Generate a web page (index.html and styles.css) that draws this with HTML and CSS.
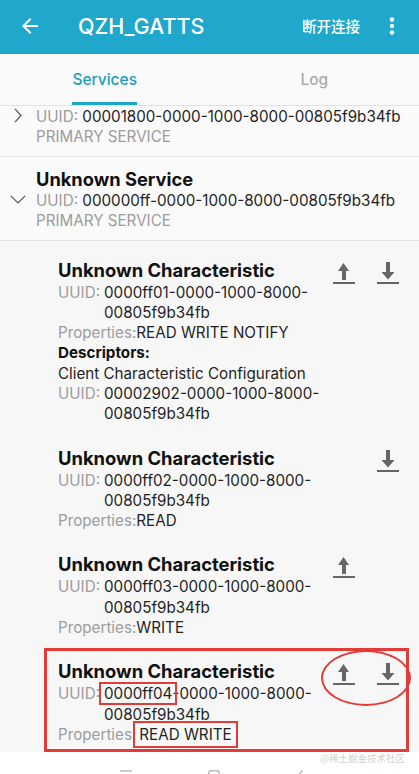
FILE: index.html
```html
<!DOCTYPE html>
<html lang="zh-CN">
<head>
<meta charset="utf-8">
<title>QZH_GATTS</title>
<link rel="stylesheet" href="styles.css">
</head>
<body>
<div class="app">
  <header class="appbar">
    <svg class="back" viewBox="0 0 24 24" width="24" height="24"><path d="M20 11H7.83l5.59-5.59L12 4l-8 8 8 8 1.41-1.41L7.83 13H20v-2z" fill="#fff"/></svg>
    <h1 class="title">QZH_GATTS</h1>
    <span class="action">断开连接</span>
    <svg class="more" viewBox="0 0 24 24" width="24" height="24"><circle cx="12" cy="5.5" r="2.2" fill="#fff"/><circle cx="12" cy="12" r="2.2" fill="#fff"/><circle cx="12" cy="18.5" r="2.2" fill="#fff"/></svg>
  </header>

  <nav class="tabs">
    <div class="tab active"><span class="tab-label">Services</span></div>
    <div class="tab"><span class="tab-label">Log</span></div>
  </nav>

  <main class="list">
    <section class="service partial">
      <svg class="chev chev-right" viewBox="0 0 8 15" width="8" height="15"><polyline points="1,0.8 7,7.5 1,14.2" fill="none" stroke="#555" stroke-width="1.2"/></svg>
      <div class="line uuid"><span class="label">UUID:</span> <span class="value">00001800-0000-1000-8000-00805f9b34fb</span></div>
      <div class="line type">PRIMARY SERVICE</div>
    </section>

    <section class="service open">
      <h2 class="svc-title">Unknown Service</h2>
      <svg class="chev chev-down" viewBox="0 0 16 9" width="16" height="9"><polyline points="0.8,0.8 8,8 15.2,0.8" fill="none" stroke="#555" stroke-width="1.2"/></svg>
      <div class="line uuid"><span class="label">UUID:</span> <span class="value">000000ff-0000-1000-8000-00805f9b34fb</span></div>
      <div class="line type">PRIMARY SERVICE</div>
    </section>

    <div class="chars">
      <article class="char">
        <div class="char-body">
          <h3 class="char-title">Unknown Characteristic</h3>
          <div class="kv"><span class="label">UUID:</span><span class="value">0000ff01-0000-1000-8000-<wbr>00805f9b34fb</span></div>
          <div class="line"><span class="label">Properties:</span><span class="value">READ WRITE NOTIFY</span></div>
          <div class="line desc-head">Descriptors:</div>
          <div class="line value">Client Characteristic Configuration</div>
          <div class="kv"><span class="label">UUID:</span><span class="value">00002902-0000-1000-8000-<wbr>00805f9b34fb</span></div>
        </div>
        <div class="actions">
          <svg class="ic up" viewBox="0 0 22 22" width="22" height="22"><path d="M10.5 1 L16 9 H13 V18 H9 V9 H5 Z M0 20 H22 V22 H0 Z" fill="#666"/></svg>
          <svg class="ic down" viewBox="0 0 22 22" width="22" height="22"><path d="M9 0 H13 V10 H17.5 L11 17.5 L4.5 10 H9 Z M0 20 H22 V22 H0 Z" fill="#666"/></svg>
        </div>
      </article>

      <article class="char">
        <div class="char-body">
          <h3 class="char-title">Unknown Characteristic</h3>
          <div class="kv"><span class="label">UUID:</span><span class="value">0000ff02-0000-1000-8000-<wbr>00805f9b34fb</span></div>
          <div class="line"><span class="label">Properties:</span><span class="value">READ</span></div>
        </div>
        <div class="actions">
          <svg class="ic down" viewBox="0 0 22 22" width="22" height="22"><path d="M9 0 H13 V10 H17.5 L11 17.5 L4.5 10 H9 Z M0 20 H22 V22 H0 Z" fill="#666"/></svg>
        </div>
      </article>

      <article class="char">
        <div class="char-body">
          <h3 class="char-title">Unknown Characteristic</h3>
          <div class="kv"><span class="label">UUID:</span><span class="value">0000ff03-0000-1000-8000-<wbr>00805f9b34fb</span></div>
          <div class="line"><span class="label">Properties:</span><span class="value">WRITE</span></div>
        </div>
        <div class="actions">
          <svg class="ic up" viewBox="0 0 22 22" width="22" height="22"><path d="M10.5 1 L16 9 H13 V18 H9 V9 H5 Z M0 20 H22 V22 H0 Z" fill="#666"/></svg>
        </div>
      </article>

      <article class="char highlight">
        <div class="char-body">
          <h3 class="char-title">Unknown Characteristic</h3>
          <div class="kv"><span class="label">UUID:</span><span class="value"><span class="mark">0000ff04</span>-0000-1000-8000-<wbr>00805f9b34fb</span></div>
          <div class="line"><span class="label">Properties:</span><span class="value mark mark-tall">READ WRITE</span></div>
        </div>
        <div class="actions circled">
          <svg class="ic up" viewBox="0 0 22 22" width="22" height="22"><path d="M10.5 1 L16 9 H13 V18 H9 V9 H5 Z M0 20 H22 V22 H0 Z" fill="#666"/></svg>
          <svg class="ic down" viewBox="0 0 22 22" width="22" height="22"><path d="M9 0 H13 V10 H17.5 L11 17.5 L4.5 10 H9 Z M0 20 H22 V22 H0 Z" fill="#666"/></svg>
        </div>
      </article>
    </div>
  </main>

  <footer class="bottom">
    <div class="watermark">@稀土掘金技术社区</div>
    <div class="navbar">
      <svg viewBox="0 0 12 12" width="12" height="12"><path d="M0 1 H12 M0 6 H12 M0 11 H12" stroke="#bbb" stroke-width="1.5"/></svg>
      <svg viewBox="0 0 12 12" width="12" height="12"><rect x="0.75" y="0.75" width="10.5" height="10.5" rx="2.5" fill="none" stroke="#bbb" stroke-width="1.5"/></svg>
      <svg viewBox="0 0 8 12" width="8" height="12"><polyline points="6.5,0.5 1.5,6 6.5,11.5" fill="none" stroke="#bbb" stroke-width="1.5"/></svg>
    </div>
  </footer>
</div>
</body>
</html>
```

FILE: styles.css
```css
* { box-sizing: border-box; }

html, body {
  margin: 0;
  padding: 0;
}

body {
  width: 419px;
  height: 774px;
  overflow: hidden;
  background: #fafafa;
  font-family: "Inter", "Noto Sans CJK SC", sans-serif;
  color: #1f1f1f;
}

.app {
  display: flex;
  flex-direction: column;
  height: 774px;
}

/* App bar */
.appbar {
  height: 54px;
  flex: none;
  background: #1fa8cc;
  display: flex;
  align-items: center;
  padding: 0 15px 3px 18px;
  color: #fff;
}

.back { flex: none; }

.title {
  margin: 0 0 0 36px;
  flex: 1;
  font-size: 21.5px;
  font-weight: 500;
  letter-spacing: 0;
}

.action {
  font-family: "Noto Sans CJK SC", sans-serif;
  font-size: 14.5px;
  font-weight: 500;
  margin-right: 20px;
}

.more { flex: none; }

/* Tabs */
.tabs {
  flex: none;
  height: 52px;
  display: grid;
  grid-template-columns: 1fr 1fr;
  background: #fafafa;
  border-bottom: 1px solid #e2e2e2;
}

.tab {
  display: flex;
  justify-content: center;
}

.tab-label {
  display: flex;
  align-items: center;
  padding-top: 3px;
  border-bottom: 3px solid transparent;
  font-size: 15.5px;
  font-weight: 500;
  color: #ababab;
}

.tab.active .tab-label {
  color: #1b9dbc;
  border-bottom-color: #1ea6c6;
}

/* List */
.list {
  flex: 1;
  overflow: hidden;
  background: #fafafa;
}

.line {
  font-size: 15.2px;
  line-height: 20px;
}

.label { color: #9c9c9c; }
.value { color: #1f1f1f; }

.service {
  display: grid;
  grid-template-columns: 36px 1fr;
  padding: 10px 0 9px;
  border-bottom: 1px solid #e2e2e2;
}

.service.partial { padding-top: 1px; }

.service > .line,
.service > .svc-title { grid-column: 2; }

.svc-title {
  margin: 0;
  font-size: 18.3px;
  line-height: 24px;
  font-weight: 700;
  color: #111;
}

.chev {
  grid-column: 1;
  justify-self: center;
  align-self: center;
}

.chev-right { grid-row: 1; margin-top: -4px; }
.chev-down { grid-row: 2; margin-top: -3px; }

.type { color: #9c9c9c; }

/* Characteristics */
.chars {
  padding-top: 5.5px;
  background: #f7f7f7;
}

.chars .line,
.chars .kv {
  line-height: 20.3px;
}

.char {
  display: flex;
  padding: 10px 20px 10px 58px;
}

.char-body {
  flex: 1;
  min-width: 0;
}

.char-title {
  margin: 0;
  font-size: 18.4px;
  line-height: 26px;
  font-weight: 700;
  color: #111;
}

.kv {
  display: grid;
  grid-template-columns: auto 1fr;
  column-gap: 4px;
  font-size: 15.2px;
}

.desc-head {
  font-weight: 700;
  color: #111;
}

.actions {
  flex: none;
  display: grid;
  grid-template-columns: 22px 22px;
  column-gap: 22px;
  align-self: flex-start;
  margin-top: 5px;
}

.ic { display: block; }
.ic.up { grid-column: 1; }
.ic.down { grid-column: 2; }

/* Annotation overlay (red marks) */
.char.highlight {
  margin: 0 10px 0 44px;
  padding: 7px 7px 3.5px 11px;
  border: 3px solid #e33b38;
}

.mark {
  outline: 2.5px solid #e33b38;
  padding: 0 3px;
  margin: 0 -3px;
}

.mark-tall {
  padding: 2px 4px;
  margin: 0 -4px 0 -1px;
}

.actions.circled {
  position: relative;
}

.actions.circled::after {
  content: "";
  position: absolute;
  left: -12px;
  top: -13px;
  width: 86px;
  height: 52px;
  border: 2.5px solid #e33b38;
  border-radius: 50%;
}

/* Bottom */
.bottom {
  flex: none;
  height: 22px;
  background: #fff;
  overflow: hidden;
}

.watermark {
  text-align: right;
  padding-right: 14px;
  font-family: "Noto Sans CJK SC", sans-serif;
  font-size: 9.5px;
  line-height: 12px;
  color: #d2d2d2;
}

.navbar {
  display: flex;
  justify-content: center;
  gap: 76px;
  padding-top: 6px;
  padding-left: 4px;
}
```
